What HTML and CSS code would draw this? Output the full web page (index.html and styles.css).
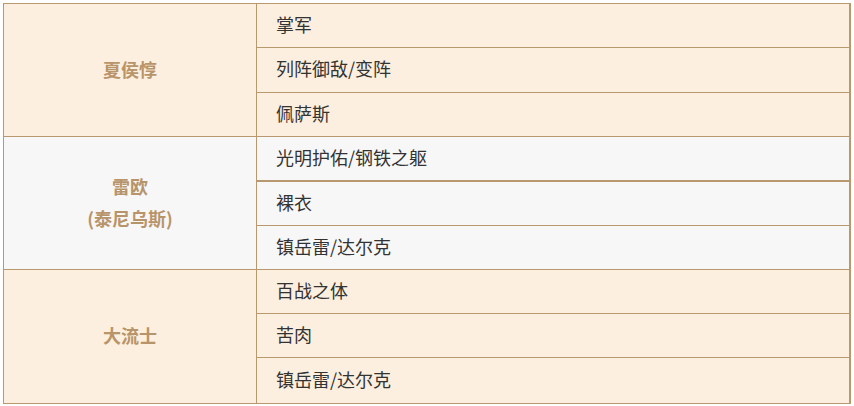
FILE: index.html
```html
<!DOCTYPE html>
<html lang="zh-CN">
<head>
<meta charset="utf-8">
<link rel="stylesheet" href="styles.css">
</head>
<body>
<div class="table">
  <div class="group cream">
    <div class="name">夏侯惇</div>
    <div class="items">
      <div class="item">掌军</div>
      <div class="item tall">列阵御敌/变阵</div>
      <div class="item">佩萨斯</div>
    </div>
  </div>
  <div class="group gray">
    <div class="name">雷欧<br>(泰尼乌斯)</div>
    <div class="items">
      <div class="item thick">光明护佑/钢铁之躯</div>
      <div class="item">裸衣</div>
      <div class="item">镇岳雷/达尔克</div>
    </div>
  </div>
  <div class="group cream">
    <div class="name">大流士</div>
    <div class="items">
      <div class="item">百战之体</div>
      <div class="item">苦肉</div>
      <div class="item tall">镇岳雷/达尔克</div>
    </div>
  </div>
</div>
</body>
</html>
```
FILE: styles.css
```css
html, body {
  margin: 0;
  padding: 0;
  background: #ffffff;
}
body {
  padding: 3px 3px 0 3px;
  font-family: "Noto Sans CJK SC", "Noto Sans", sans-serif;
  font-size: 18px;
  color: #333333;
}
.table {
  width: 845px;
  border: 1px solid #b8996f;
  border-right-width: 2px;
}
.group {
  display: flex;
  border-bottom: 1px solid #b8996f;
}
.group:last-child {
  border-bottom: none;
}
.cream {
  background: #fcefdf;
}
.gray {
  background: #f7f7f7;
}
.name {
  width: 253px;
  flex: none;
  box-sizing: border-box;
  padding-bottom: 3px;
  border-right: 1px solid #b8996f;
  display: flex;
  align-items: center;
  justify-content: center;
  text-align: center;
  font-weight: bold;
  color: #b8946a;
  line-height: 32px;
}
.items {
  flex: 1;
  display: flex;
  flex-direction: column;
}
.item {
  box-sizing: border-box;
  height: 44px;
  display: flex;
  align-items: center;
  padding: 0 0 4px 19px;
  border-bottom: 1px solid #b8996f;
  line-height: 1;
}
.item:last-child {
  height: 43px;
  border-bottom: none;
}
.item.tall {
  height: 45px;
}
.item.thick {
  height: 45px;
  border-bottom-width: 2px;
}
```
